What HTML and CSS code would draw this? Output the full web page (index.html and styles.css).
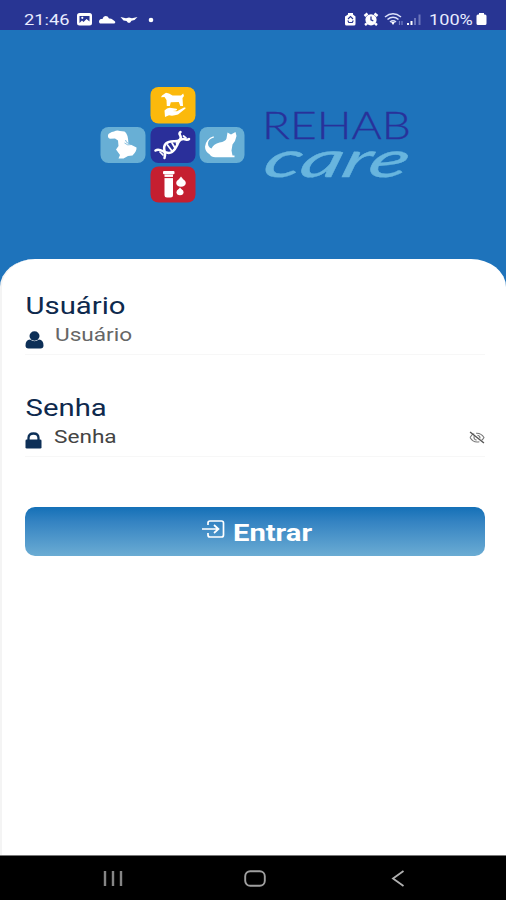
FILE: index.html
```html
<!DOCTYPE html>
<html lang="pt-BR">
<head>
<meta charset="utf-8">
<title>Rehab Care</title>
<link rel="stylesheet" href="styles.css">
</head>
<body>
<div class="screen">
  <div class="status">
    <div class="status-left">
      <span class="status-time wide">21:46</span>
      <svg class="status-icons-left" width="80" height="16" viewBox="0 0 80 16" fill="#fff">
        <rect x="2" y="2" width="15" height="12.500" rx="2.500"/>
        <path d="M4.500 12V5h10v5.500l-3-2.500L8.500 11 7 9.500Z" fill="#283593"/>
        <circle cx="7.300" cy="6.800" r="1.100"/>
        <path d="M25 12.500a2.500 2.500 0 0 1 0-4c1-.6 1.800-.6 2.500-.4 1-3.800 5-4 6.500-.5 3-.3 4 1.700 5.500 2.300 1.500 1 .5 2.600-.5 2.600Z"/>
        <path d="M45.500 6l5.500 1.200 3-.7 3 .7 5.500-1.200-3 3-3 .8-1.500 2h-2l-1.500-1.800-3-.6Z"/>
        <circle cx="76" cy="9" r="2.300"/>
      </svg>
    </div>
    <div class="status-right">
      <svg width="80" height="16" viewBox="0 0 80 16" fill="none">
        <path d="M1 5.500 4 3.500V2h5v1.500l2.500 2V13q0 1.500-1.500 1.500H2.500Q1 14.500 1 13Z" fill="#fff"/>
        <path d="m4 8 2.500-2.500L9 8M3.800 9.500l1 2h3.500l1-2" stroke="#283593" stroke-width="1.100"/>
        <circle cx="27" cy="8.800" r="5.600" fill="#fff"/>
        <path d="m20.500 5 3-2.500M33.500 5l-3-2.500M23 12.500l-2 1.500M31 12.500l2 1.500" stroke="#fff" stroke-width="2.500"/>
        <path d="M27 5.500v3.300l2.300 1" stroke="#283593" stroke-width="1.300"/>
        <path d="M41 6q8-6.500 16 0M43.500 8.500q5.500-4.500 11 0M46 11q3-2.500 6 0" stroke="#dce1fa" stroke-width="1.600"/>
        <path d="m47 11 2 3 2-3Z" fill="#fff"/>
        <path d="M55.500 14v-4M58 10v4" stroke="#7580c5" stroke-width="1.200"/>
        <path d="M64 14v-2M67.500 14v-4" stroke="#fff" stroke-width="2"/>
        <path d="M71 14V7M75.500 14V3.500" stroke="#6c76bb" stroke-width="2"/>
      </svg>
      <span class="status-pct wide">100%</span>
      <svg class="battery" width="11" height="14" viewBox="0 0 11 14" fill="#fff"><path d="M3 1h5v1.500h1q1.500 0 1.500 1.500v7.500q0 1.500-1.500 1.500H2Q.5 13 .5 11.500V4Q.5 2.500 2 2.500h1Z"/></svg>
    </div>
  </div>

  <header class="hero">
    <svg class="logo" width="320" height="126" viewBox="95 82 320 126">
      <rect x="150.500" y="87" width="45" height="36.500" rx="8" fill="#fbb90c"/>
      <rect x="150.500" y="127" width="45" height="36" rx="8" fill="#2a2f9a"/>
      <rect x="100.500" y="127" width="45" height="36" rx="8" fill="#68afd5"/>
      <rect x="199.500" y="127" width="45" height="36" rx="8" fill="#68afd5"/>
      <rect x="150.500" y="166.500" width="45" height="36" rx="8" fill="#c51f30"/>
      <g fill="#fff">
        <path d="M162 95.500l4-2.700 3 .7 3.500 2h8.500l2.200-2 .8 2.500-1.500 2 .5 8h-2.700l-1.500-4-8 .2-1 3.800h-3l-.3-6-2-3-3.500.2Z"/>
        <path d="M164.500 110.500q3-3.500 7-2.500l5 .7q1.500 1.300-1 2l-3 .3 4.500.2 7-3.700q2-.5 1.500 1l-7.500 6q-5 1.800-9 .8l-4 1.700Z"/>
        <path d="M108 135Q109 132.500 114 131.500Q117 130 120 131L124.500 131.500Q128 133.500 128.500 143.500L136.500 147.500Q137 151 132.500 155.500L128 156L123.500 158.500L118.500 158.500L120 155L116 149.500L118.500 146L118 140.500L115 138.500L110 138.800Q107.500 138 108 135Z"/>
        <path d="M214 137.500q-6 1.500-6 6 0 3.500 3.500 5 2-4.500 8-6 6-1 7-4l1-6 3.500 2 4.500-2.500 1 4-1.500 5-2.500 3.500-1 6 1 5h2v1.800h-18q-5 .5-7-3-4.500-3-4.500-7.500 1-8 8.500-10.500Z"/>
        <rect x="163" y="171" width="11.500" height="3.200" rx="1"/>
        <path d="M164.500 174.500h8.500V195q0 2.500-2.500 2.500h-3.500q-2.500 0-2.500-2.500Z"/>
        <ellipse cx="181" cy="183" rx="4.800" ry="3.800"/>
        <path d="m177.500 181 3.500-4.500 3.500 4.500Z"/>
        <ellipse cx="180" cy="192.300" rx="3.500" ry="3"/>
        <path d="m177.500 190.500 2.500-3 2.500 3Z"/>
      </g>
      <path d="M125.500 140q.5 3 3.500 3.500M124.500 143q3 3 7 1.500" fill="none" stroke="#68afd5" stroke-width=".8"/>
      <path d="M164 177.500h9.500" stroke="#c51f30" stroke-width="1.200"/>
      <g fill="none" stroke="#fff" stroke-width="2.500" stroke-linecap="round">
        <path d="M155.500 150.500C161 147 166 156 172 152S177 141 181 139.500s6 1.500 8-.5"/>
        <path d="M164.500 158C167 152 161 148 166 143.500s11 0 14-4-3-5 .5-7.500"/>
        <path d="m167.500 145 4 5.500M172 143l3 5M176.500 143l1 2M160 152l3 3M183.500 136l2.500 2" stroke-width="1.700"/>
      </g>
      <text class="brand-main" x="262" y="138.700" textLength="149" lengthAdjust="spacingAndGlyphs">REHAB</text>
      <g transform="translate(261 176.500) skewX(-16)">
        <text class="brand-script" x="0" y="0" textLength="144" lengthAdjust="spacingAndGlyphs">care</text>
      </g>
    </svg>
  </header>

  <main class="card">
    <form class="form">
      <div class="field">
        <label class="label wide">Usuário</label>
        <div class="row">
          <svg class="lead" width="19" height="18" viewBox="0 0 19 18" fill="#0d2f57"><ellipse cx="9.500" cy="5" rx="5" ry="4.700"/><path d="M5 8.500q4.500 3.500 9 0 4.500.5 4.500 6 0 3-3 3h-12q-3 0-3-3 0-5.500 4.500-6Z"/></svg>
          <span class="value value-user wide">Usuário</span>
        </div>
      </div>
      <div class="field">
        <label class="label wide">Senha</label>
        <div class="row row-pass">
          <svg class="lead" width="17" height="17" viewBox="0 0 17 17"><path d="M3.500 8V6q0-4.500 5-4.500t5 4.500v2" fill="none" stroke="#0d2f57" stroke-width="2.300"/><rect x=".5" y="7.500" width="16" height="9" rx="1.300" fill="#0d2f57"/></svg>
          <span class="value value-pass wide">Senha</span>
          <svg class="eye" width="16" height="13" viewBox="0 0 17 14" fill="none" stroke="#777" stroke-width="1.200"><path d="M1 7q2-3.500 4.500-4M7.500 2.400Q13 2 16 7q-1 2-2.500 3M11 11.500Q4.500 13 1 7M5.500 5.500Q4.500 9 8 9.800M9 4.500q3 .5 2.700 3.500"/><path d="m1 1 15 12" stroke="#555" stroke-width="1.500"/></svg>
        </div>
      </div>
      <button class="submit" type="button">
        <svg class="enter" width="23" height="18" viewBox="0 0 23 18" fill="none" stroke="#fff" stroke-width="1.700"><path d="M6 5V3q0-2 2-2h11.500q2 0 2 2v12q0 2-2 2H8q-2 0-2-2v-2M0 9h16M12 5l4.500 4-4.500 4"/></svg>
        <span class="submit-text wide">Entrar</span>
      </button>
    </form>
  </main>

  <nav class="nav">
    <svg width="20" height="17" viewBox="0 0 20 17" stroke="#858585" stroke-width="2.400"><path d="M2 1v15M10 1v15M18 1v15"/></svg>
    <svg class="home" width="22" height="17" viewBox="0 0 22 17" fill="none" stroke="#a0a0a0" stroke-width="1.900"><rect x="1.200" y="1.200" width="19.600" height="14.600" rx="5"/></svg>
    <svg width="14" height="17" viewBox="0 0 14 17" fill="none" stroke="#b0b0b0" stroke-width="1.800"><path d="M12.500 1 2 8.500 12.500 16"/></svg>
  </nav>
</div>
</body>
</html>
```

FILE: styles.css
```css
* { box-sizing: border-box; }
body { margin: 0; font-family: Roboto, "Liberation Sans", sans-serif; }
svg { display: block; flex: none; }
.screen { width: 506px; height: 900px; display: flex; flex-direction: column; background: #1e73bb; overflow: hidden; }

/* Type is set slightly extended across the whole interface */
.wide { display: block; transform: scaleX(1.22); transform-origin: left center; white-space: nowrap; }

.status { height: 30px; flex: none; background: #283593; color: #e9ecff; display: flex; justify-content: space-between; padding: 11px 19px 0 24px; font-size: 15.5px; line-height: 18px; }
.status-left, .status-right { display: flex; }
.status-time { width: 51px; transform: scaleX(1.18); }
.status-pct { width: 46px; margin-left: 5px; transform: scaleX(1.17); }
.battery { margin: 1px 0 0 1px; }

.hero { height: 229px; flex: none; padding: 52px 0 0 95px; }
.brand-main { font-family: Lato, sans-serif; font-weight: 300; font-size: 38px; fill: #28319a; stroke: #28319a; stroke-width: .3px; }
.brand-script { font-family: Lato, sans-serif; font-style: italic; font-weight: 400; font-size: 50px; fill: #68b5de; stroke: #68b5de; stroke-width: .4px; stroke-linejoin: round; }

.card { flex: 1; background: #fff; border-left: 2px solid #f4f4f4; border-radius: 35px 35px 0 0 / 28px 28px 0 0; padding: 31px 21px 0 23px; }
.field { height: 102px; }
.label { width: max-content; height: 32px; padding-left: .5px; font-size: 24px; line-height: 32px; color: #0e294d; }
.row { height: 33px; display: flex; border-bottom: 1px solid #f7f7f7; }
.lead { margin-top: 9px; }
.row-pass .lead { margin-top: 8px; }
.value { height: 26px; font-size: 19px; line-height: 25px; }
.value-user { margin-left: 11px; color: #666; transform: scaleX(1.19); }
.value-pass { margin-left: 12px; color: #444; transform: scaleX(1.19); }
.eye { margin: 7px 0 0 auto; }
.submit { width: 100%; height: 49px; margin-top: 13px; padding: 0 0 0 177px; border: 0; border-radius: 10px; background: linear-gradient(#1470b7, #3483c2 30%, #6bacd3); color: #fff; display: flex; font-family: inherit; }
.enter { margin-top: 13px; }
.submit-text { margin-left: 8px; font-size: 23.5px; font-weight: 700; line-height: 52px; transform: scaleX(1.24); }

.nav { height: 45px; flex: none; background: #000; border-top: 1px solid #777; display: flex; justify-content: space-between; padding: 14px 101px 0 103px; }
.home { margin: 0 2px 0 -2px; }
```
